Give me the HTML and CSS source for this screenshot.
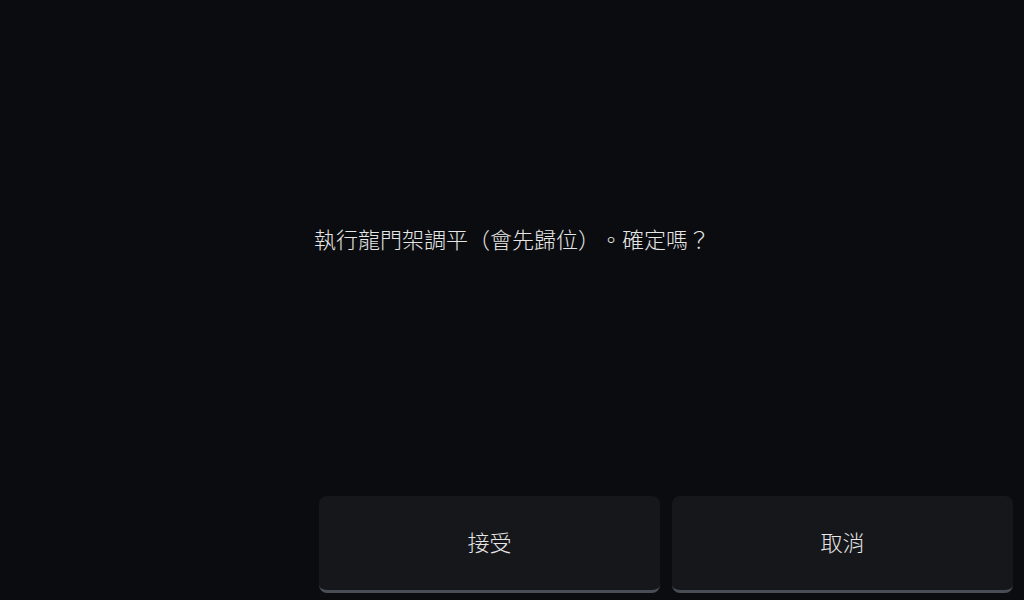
FILE: index.html
```html
<!DOCTYPE html>
<html lang="zh-Hant">
<head>
<meta charset="utf-8">
<link rel="stylesheet" href="styles.css">
</head>
<body>
<div class="screen">
  <div class="message">執行龍門架調平（會先歸位）。確定嗎？</div>
  <div class="actions">
    <button class="btn">接受</button>
    <button class="btn">取消</button>
  </div>
</div>
</body>
</html>
```

FILE: styles.css
```css
html, body {
  margin: 0;
  padding: 0;
  background: #0b0c0f;
}
.screen {
  width: 1024px;
  height: 600px;
  display: flex;
  flex-direction: column;
  font-family: "Noto Sans CJK TC", "Noto Sans", sans-serif;
  color: #e6e6e6;
  text-spacing-trim: space-all;
}
.message {
  height: 480px;
  display: flex;
  align-items: center;
  justify-content: center;
  font-size: 22px;
  font-weight: 300;
  line-height: 1;
  padding-bottom: 4px;
  box-sizing: border-box;
}
.actions {
  display: flex;
  justify-content: flex-end;
  gap: 12px;
  padding: 16px 11px 0 0;
}
.btn {
  width: 341px;
  height: 97px;
  background: #16171b;
  border: none;
  border-bottom: 3px solid #474c55;
  border-radius: 8px;
  color: #e6e6e6;
  font-family: "Noto Sans CJK TC", "Noto Sans", sans-serif;
  font-size: 22px;
  font-weight: 300;
  text-spacing-trim: space-all;
  padding: 0 0 4px 0;
}
```
